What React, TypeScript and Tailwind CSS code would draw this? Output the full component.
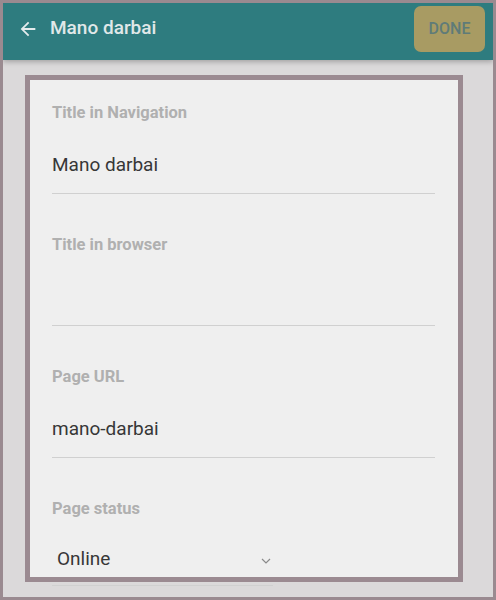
import React from 'react';

const ArrowBack: React.FC = () => (
  <svg width="22" height="22" viewBox="0 0 24 24" fill="currentColor" aria-hidden="true">
    <path d="M20 11H7.83l5.59-5.59L12 4l-8 8 8 8 1.41-1.41L7.83 13H20v-2z" />
  </svg>
);

const Field: React.FC<{ label: string; value?: string }> = ({ label, value }) => (
  <div className="flex flex-col border-b border-[#d0d0d0] pb-[14px]">
    <span className="h-[20px] text-[16.5px] leading-[20px] font-bold text-[#b0b0b0]">{label}</span>
    <span className="mt-[28px] h-[28px] text-[19px] leading-[28px] text-[#373737]">{value}</span>
  </div>
);

export default function App() {
  return (
    <div className="flex h-[600px] w-[496px] flex-col overflow-hidden border-[3px] border-[#9a8a90] bg-[#dbd9da] font-['Roboto',sans-serif]">
      <header className="relative z-10 flex h-[57px] shrink-0 items-center bg-[#2e7c7f] pb-[6px] pl-[14px] pr-[8px] shadow-[0_2px_5px_rgba(0,0,0,0.25)]">
        <span className="text-[#e3ebec]">
          <ArrowBack />
        </span>
        <span className="ml-[11px] text-[19px] font-medium text-[#e0e8e9]">Mano darbai</span>
        <button className="ml-auto flex h-[46px] w-[71px] items-center justify-center rounded-[7px] bg-[#a89b63] text-[16px] font-medium text-[#5f7b78]">
          DONE
        </button>
      </header>

      <main className="flex-1 pl-[22px] pt-[15px]">
        <div className="h-[507px] w-[438px] border-[5px] border-[#9b8a91] bg-[#efefef]">
          <div className="flex flex-col gap-[41px] pl-[22px] pr-[23px] pt-[23px]">
            <Field label="Title in Navigation" value="Mano darbai" />
            <Field label="Title in browser" />
            <Field label="Page URL" value="mano-darbai" />
            <div className="flex w-[221px] flex-col border-b border-[#d0d0d0] pb-[12px]">
              <span className="h-[20px] text-[16.5px] leading-[20px] font-bold text-[#b0b0b0]">Page status</span>
              <div className="mt-[26px] flex h-[28px] items-center pl-[5px] pr-[2px]">
                <span className="text-[19px] leading-[28px] text-[#373737]">Online</span>
                <svg className="ml-auto mt-[4px]" width="10" height="6" viewBox="0 0 10 6" fill="none" stroke="#8a8a8a" strokeWidth="1.2">
                  <path d="M1 1l4 4 4-4" />
                </svg>
              </div>
            </div>
          </div>
        </div>
      </main>
    </div>
  );
}
